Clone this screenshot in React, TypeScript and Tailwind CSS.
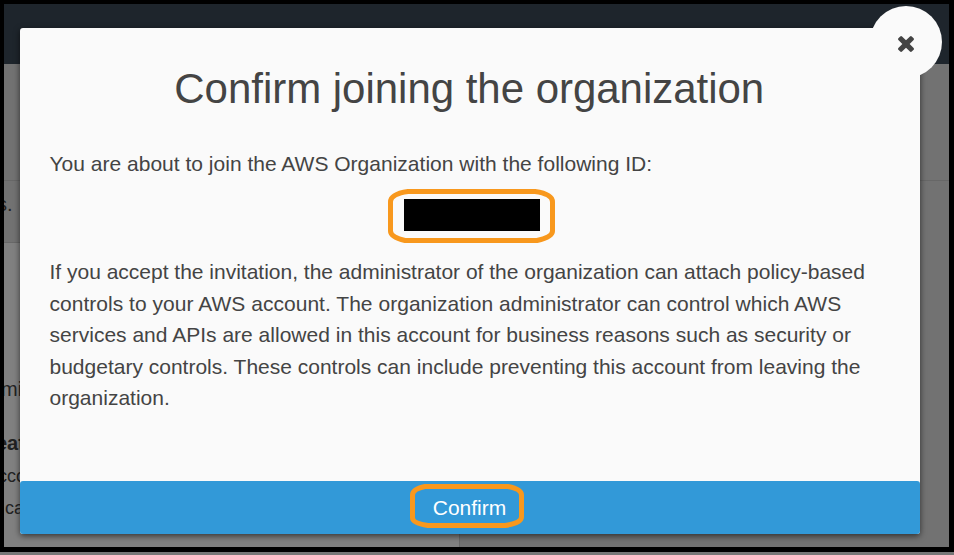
const paragraph = [
  { text: 'If you accept the invitation, the administrator of the organization can attach policy-based', tracking: 'tracking-[-0.006px]' },
  { text: 'controls to your AWS account. The organization administrator can control which AWS', tracking: 'tracking-[0.028px]' },
  { text: 'services and APIs are allowed in this account for business reasons such as security or', tracking: 'tracking-[0.008px]' },
  { text: 'budgetary controls. These controls can include preventing this account from leaving the', tracking: 'tracking-normal' },
  { text: 'organization.', tracking: 'tracking-normal' },
];

function PageBehind() {
  return (
    <div className="flex h-[552px] flex-col overflow-hidden border-t-4 border-r-5 border-b-5 border-l-4 border-black bg-[#727272]">
      <header className="h-[60px] shrink-0 bg-[#1e252c]" />
      <div className="h-[117px] shrink-0 border-b border-[#676767]" />
      <div className="flex h-[61px] shrink-0 items-start pt-[10px] text-[20px] leading-[26px] text-[#222]">
        <span className="-ml-[7px]">s.</span>
      </div>
      <div className="flex min-h-0 flex-1">
        <section className="flex w-[456px] flex-col overflow-hidden border-t border-r border-[#686868] bg-[#808080] whitespace-nowrap text-[#222]">
          <div className="mt-[132px] -ml-[3px] text-[20px] leading-[28px]">min</div>
          <div className="mt-[27px] -ml-[8px] text-[20px] leading-[26px] font-bold">eat</div>
          <div className="mt-[4px] -ml-[6px] text-[18px] leading-[32px]">cco</div>
          <div className="ml-px text-[18px] leading-[32px]">ca</div>
        </section>
      </div>
    </div>
  );
}

function Outline({ w, h, d }: { w: number; h: number; d: string }) {
  return (
    <svg className="pointer-events-none absolute inset-0" width={w} height={h} fill="none" stroke="#f8981d" strokeWidth="5">
      <path d={d} />
    </svg>
  );
}

function Dialog() {
  return (
    <div
      role="dialog"
      className="absolute top-[28px] left-[20px] flex h-[506px] w-[900px] flex-col rounded-[3px] bg-[#fafafa] text-[#444] shadow-[0_2px_6px_rgba(0,0,0,0.6)]"
    >
      <button aria-label="Close" className="absolute -top-[22px] -right-[22px] flex size-[72px] items-center justify-center rounded-full bg-[#fafafa]">
        <svg width="16" height="16" viewBox="110 366 1188 1188" className="mt-[4px]" fill="#444">
          <path d="M1298 1322q0 40-28 68l-136 136q-28 28-68 28t-68-28l-294-294-294 294q-28 28-68 28t-68-28l-136-136q-28-28-28-68t28-68l294-294-294-294q-28-28-28-68t28-68l136-136q28-28 68-28t68 28l294 294 294-294q28-28 68-28t68 28l136 136q28 28 28 68t-28 68l-294 294 294 294q28 28 28 68z" />
        </svg>
      </button>
      <h1 className="mt-[36px] pr-[1.5px] text-center text-[42px] leading-[50px] tracking-[-0.025px] whitespace-nowrap">Confirm joining the organization</h1>
      <div className="flex flex-1 flex-col pr-[30px] pl-[29.5px] pt-[34px] text-[21px] leading-[31.5px]">
        <p className="tracking-[0.01px]">You are about to join the AWS Organization with the following ID:</p>
        <div className="relative mt-[9.5px] ml-[338.5px] flex h-[53px] w-[167px] justify-center pt-[10px]">
          <div className="h-[32px] w-[136px] bg-black" />
          <Outline w={167} h={54} d="M20 2.500H147Q164.500 5 164.500 13V42Q164.500 48 149 51.500H17Q2.500 48 2.500 42V13Q2.500 5 20 2.500Z" />
        </div>
        <p className="mt-[14px] whitespace-nowrap">
          {paragraph.map((line) => (
            <span key={line.text} className={`block ${line.tracking}`}>{line.text}</span>
          ))}
        </p>
      </div>
      <footer className="flex h-[53px] shrink-0 items-start rounded-[3px] bg-[#3299d8] pt-[3px]">
        <button className="relative ml-[390px] flex h-[44px] w-[114px] items-center justify-center pt-[3px] pl-[5px] text-[21px] text-white">
          Confirm
          <Outline w={114} h={44} d="M15 2.500H98Q111.500 5 111.500 11V33Q111.500 39 95 41.500H18Q2.500 39 2.500 34V11Q2.500 5 15 2.500Z" />
        </button>
      </footer>
    </div>
  );
}

export default function App() {
  return (
    <main className="relative h-[555px] w-[954px] overflow-hidden bg-[#777] font-['Liberation_Sans',Arial,sans-serif]">
      <PageBehind />
      <Dialog />
    </main>
  );
}
